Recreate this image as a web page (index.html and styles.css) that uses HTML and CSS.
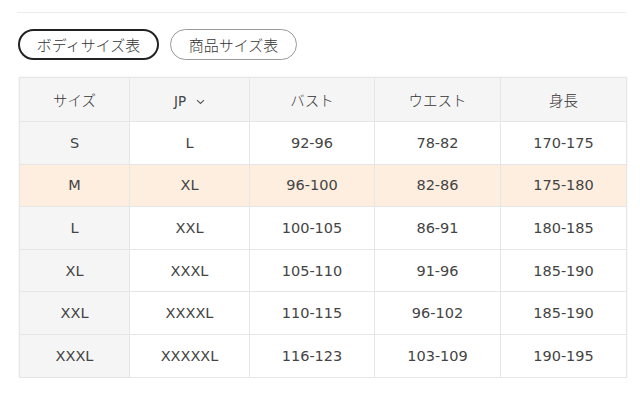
FILE: index.html
```html
<!DOCTYPE html>
<html lang="ja">
<head>
<meta charset="utf-8">
<link rel="stylesheet" href="styles.css">
</head>
<body>
<div class="page">
  <hr class="rule">
  <div class="tabs">
    <button class="tab active">ボディサイズ表</button>
    <button class="tab">商品サイズ表</button>
  </div>
  <table class="size-table">
    <colgroup>
      <col class="c1"><col class="c2"><col class="c3"><col class="c4"><col class="c5">
    </colgroup>
    <thead>
      <tr>
        <th>サイズ</th>
        <th><span class="jp">JP<svg class="chev" width="9" height="6" viewBox="0 0 9 6"><path d="M1 1.2 L4.5 4.5 L8 1.2" fill="none" stroke="#555" stroke-width="1.1"/></svg></span></th>
        <th>バスト</th>
        <th>ウエスト</th>
        <th>身長</th>
      </tr>
    </thead>
    <tbody>
      <tr><th>S</th><td>L</td><td>92-96</td><td>78-82</td><td>170-175</td></tr>
      <tr class="hl"><th>M</th><td>XL</td><td>96-100</td><td>82-86</td><td>175-180</td></tr>
      <tr><th>L</th><td>XXL</td><td>100-105</td><td>86-91</td><td>180-185</td></tr>
      <tr><th>XL</th><td>XXXL</td><td>105-110</td><td>91-96</td><td>185-190</td></tr>
      <tr><th>XXL</th><td>XXXXL</td><td>110-115</td><td>96-102</td><td>185-190</td></tr>
      <tr><th>XXXL</th><td>XXXXXL</td><td>116-123</td><td>103-109</td><td>190-195</td></tr>
    </tbody>
  </table>
</div>
</body>
</html>
```
FILE: styles.css
```css
html, body {
  margin: 0;
  padding: 0;
  background: #fff;
}
body {
  font-family: "DejaVu Sans", "Noto Sans CJK JP", sans-serif;
  color: #444;
}
.page {
  padding: 12px 14px 0 18px;
}
.rule {
  margin: 0 0 0 -1px;
  border: 0;
  border-top: 1px solid #ececec;
  height: 0;
}
.tabs {
  display: flex;
  gap: 11px;
  margin-top: 16px;
}
.tab {
  font-family: "Noto Sans CJK JP", sans-serif;
  font-weight: 300;
  font-size: 15px;
  color: #333;
  background: #fff;
  height: 31px;
  border-radius: 16px;
  border: 1px solid #9a9a9a;
  padding: 0;
  line-height: 1;
  cursor: pointer;
}
.tab.active {
  border: 2px solid #222;
  width: 141px;
}
.tab:not(.active) {
  width: 127px;
}
.size-table {
  margin-top: 17px;
  margin-left: 1px;
  width: 607px;
  border-collapse: collapse;
  table-layout: fixed;
  font-size: 14.5px;
  box-shadow: 0 0 2px rgba(0,0,0,0.08);
}
.c1 { width: 110px; }
.c2 { width: 120px; }
.c3 { width: 125px; }
.c4 { width: 126px; }
.c5 { width: 126px; }
.size-table th, .size-table td {
  border: 1px solid #e6e6e6;
  text-align: center;
  font-weight: normal;
  height: 41.6px;
  padding: 0;
  color: #444;
}
.size-table thead th {
  background: #f5f5f5;
  height: 43px;
  font-family: "Noto Sans CJK JP", sans-serif;
  font-weight: 300;
  font-size: 14.5px;
  color: #333;
}
.size-table tbody th {
  background: #f5f5f5;
}
.size-table tr.hl th, .size-table tr.hl td {
  background: #fdeee0;
}
.size-table thead th .jp {
  display: inline-flex;
  align-items: center;
  gap: 10px;
  font-family: "DejaVu Sans", sans-serif;
  font-weight: normal;
  font-size: 13.5px;
  color: #444;
}
.chev {
  display: block;
  margin-top: 2px;
}
```
